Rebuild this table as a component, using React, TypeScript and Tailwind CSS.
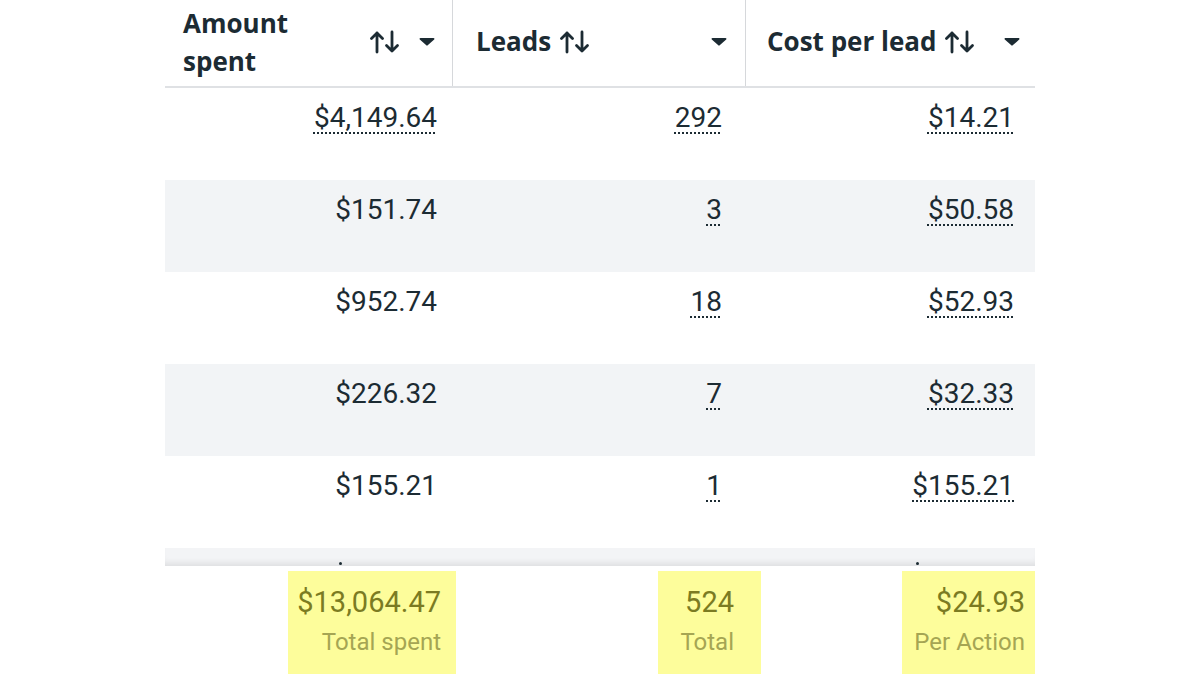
import React from 'react';

const SortIcon = () => (
    <svg width="30" height="24" viewBox="0 0 30 24" fill="none" stroke="#1c2b33" strokeWidth="2.8" strokeLinecap="round" strokeLinejoin="round">
        <path d="M7 22V3M1.5 8.5L7 3l5.5 5.5" />
        <path d="M22 2v19M16.5 15.5L22 21l5.5-5.5" />
    </svg>
);

const Caret = () => (
    <svg width="16" height="9" viewBox="0 0 16 9">
        <path d="M1.5 1h13c.9 0 1.3 1 .7 1.6L8.7 8.3a1 1 0 0 1-1.4 0L.8 2.6C.2 2 .6 1 1.5 1z" fill="#1c2b33" />
    </svg>
);

type Cell = { text: string; dotted: boolean };

const rows: Cell[][] = [
    [{ text: '$4,149.64', dotted: true }, { text: '292', dotted: true }, { text: '$14.21', dotted: true }],
    [{ text: '$151.74', dotted: false }, { text: '3', dotted: true }, { text: '$50.58', dotted: true }],
    [{ text: '$952.74', dotted: false }, { text: '18', dotted: true }, { text: '$52.93', dotted: true }],
    [{ text: '$226.32', dotted: false }, { text: '7', dotted: true }, { text: '$32.33', dotted: true }],
    [{ text: '$155.21', dotted: false }, { text: '1', dotted: true }, { text: '$155.21', dotted: true }],
];

const cellPad = ['pr-[16px]', 'pr-[24px]', 'pr-[21px]'];
const colWidth = ['w-[288px]', 'w-[293px]', 'w-[289px]'];

const Value: React.FC<{ cell: Cell }> = ({ cell }) => (
    <span
        className={
            cell.dotted
                ? 'underline decoration-dotted decoration-[2px] underline-offset-[5px] decoration-[#1c2b33]'
                : ''
        }
    >
        {cell.text}
    </span>
);

export default function App() {
    return (
        <div className="min-h-[675px] w-full bg-white" style={{ fontFamily: 'Roboto, "Liberation Sans", sans-serif' }}>
            <div className="mx-auto w-[870px] text-[#1c2b33]">
                {/* header */}
                <div className="flex h-[88px] border-b-2 border-[#dfe1e4]" style={{ fontFamily: '"Open Sans", Roboto, sans-serif' }}>
                    <div className="flex w-[288px] items-center border-r-[1.5px] border-[#d6d8db] pb-[3px] pl-[18px] pr-[17px]">
                        <div className="text-[26px] font-bold leading-[38px]">
                            Amount
                            <br />
                            spent
                        </div>
                        <div className="ml-auto flex items-center gap-[19px]">
                            <SortIcon />
                            <Caret />
                        </div>
                    </div>
                    <div className="flex w-[293px] items-center border-r-[1.5px] border-[#d6d8db] pb-[3px] pl-[23px] pr-[18px]">
                        <span className="text-[26px] font-bold">Leads</span>
                        <span className="ml-[9px] flex"><SortIcon /></span>
                        <span className="ml-auto flex"><Caret /></span>
                    </div>
                    <div className="flex w-[289px] items-center pb-[3px] pl-[21px] pr-[15px]">
                        <span className="text-[26px] font-bold">Cost per lead</span>
                        <span className="ml-[9px] flex"><SortIcon /></span>
                        <span className="ml-auto flex"><Caret /></span>
                    </div>
                </div>

                {/* rows */}
                {rows.map((row, i) => (
                    <div key={i} className={`flex h-[92px] ${i % 2 === 1 ? 'bg-[#f2f4f6]' : 'bg-white'}`}>
                        {row.map((cell, j) => (
                            <div key={j} className={`${colWidth[j]} ${cellPad[j]} pt-[13px] text-right text-[28px] leading-[34px]`}>
                                <Value cell={cell} />
                            </div>
                        ))}
                    </div>
                ))}

                {/* clipped next row */}
                <div className="flex h-[18px] bg-[#f3f4f6] shadow-[inset_0_-7px_6px_-4px_rgba(0,0,0,0.09)]">
                    <div className="flex w-[288px] items-end justify-end pr-[111px] pb-[1px]">
                        <span className="h-[3px] w-[3px] rounded-full bg-[#1c2b33]" />
                    </div>
                    <div className="w-[293px]" />
                    <div className="flex w-[289px] items-end justify-end pr-[116px] pb-[1px]">
                        <span className="h-[3px] w-[3px] rounded-full bg-[#1c2b33]" />
                    </div>
                </div>

                {/* footer totals */}
                <div className="flex h-[108px] pt-[5px]">
                    <div className="flex w-[291px] justify-end">
                        <div className="flex flex-col items-end bg-[#fdfd9b] pl-[9px] pr-[15px] pt-[14px]">
                            <span className="text-[29px] leading-[34px] text-[#7b7b22]">$13,064.47</span>
                            <span className="mt-[6px] text-[24px] leading-[34px] text-[#a5a553]">Total spent</span>
                        </div>
                    </div>
                    <div className="flex w-[305px] justify-end">
                        <div className="flex w-[103px] flex-col items-end bg-[#fdfd9b] pr-[27px] pt-[14px]">
                            <span className="text-[29px] leading-[34px] text-[#7b7b22]">524</span>
                            <span className="mt-[6px] text-[24px] leading-[34px] text-[#a5a553]">Total</span>
                        </div>
                    </div>
                    <div className="flex w-[274px] justify-end">
                        <div className="flex w-[133px] flex-col items-end bg-[#fdfd9b] pr-[10px] pt-[14px]">
                            <span className="text-[29px] leading-[34px] text-[#7b7b22]">$24.93</span>
                            <span className="mt-[6px] text-[24px] leading-[34px] text-[#a5a553]">Per Action</span>
                        </div>
                    </div>
                </div>
            </div>
        </div>
    );
}
